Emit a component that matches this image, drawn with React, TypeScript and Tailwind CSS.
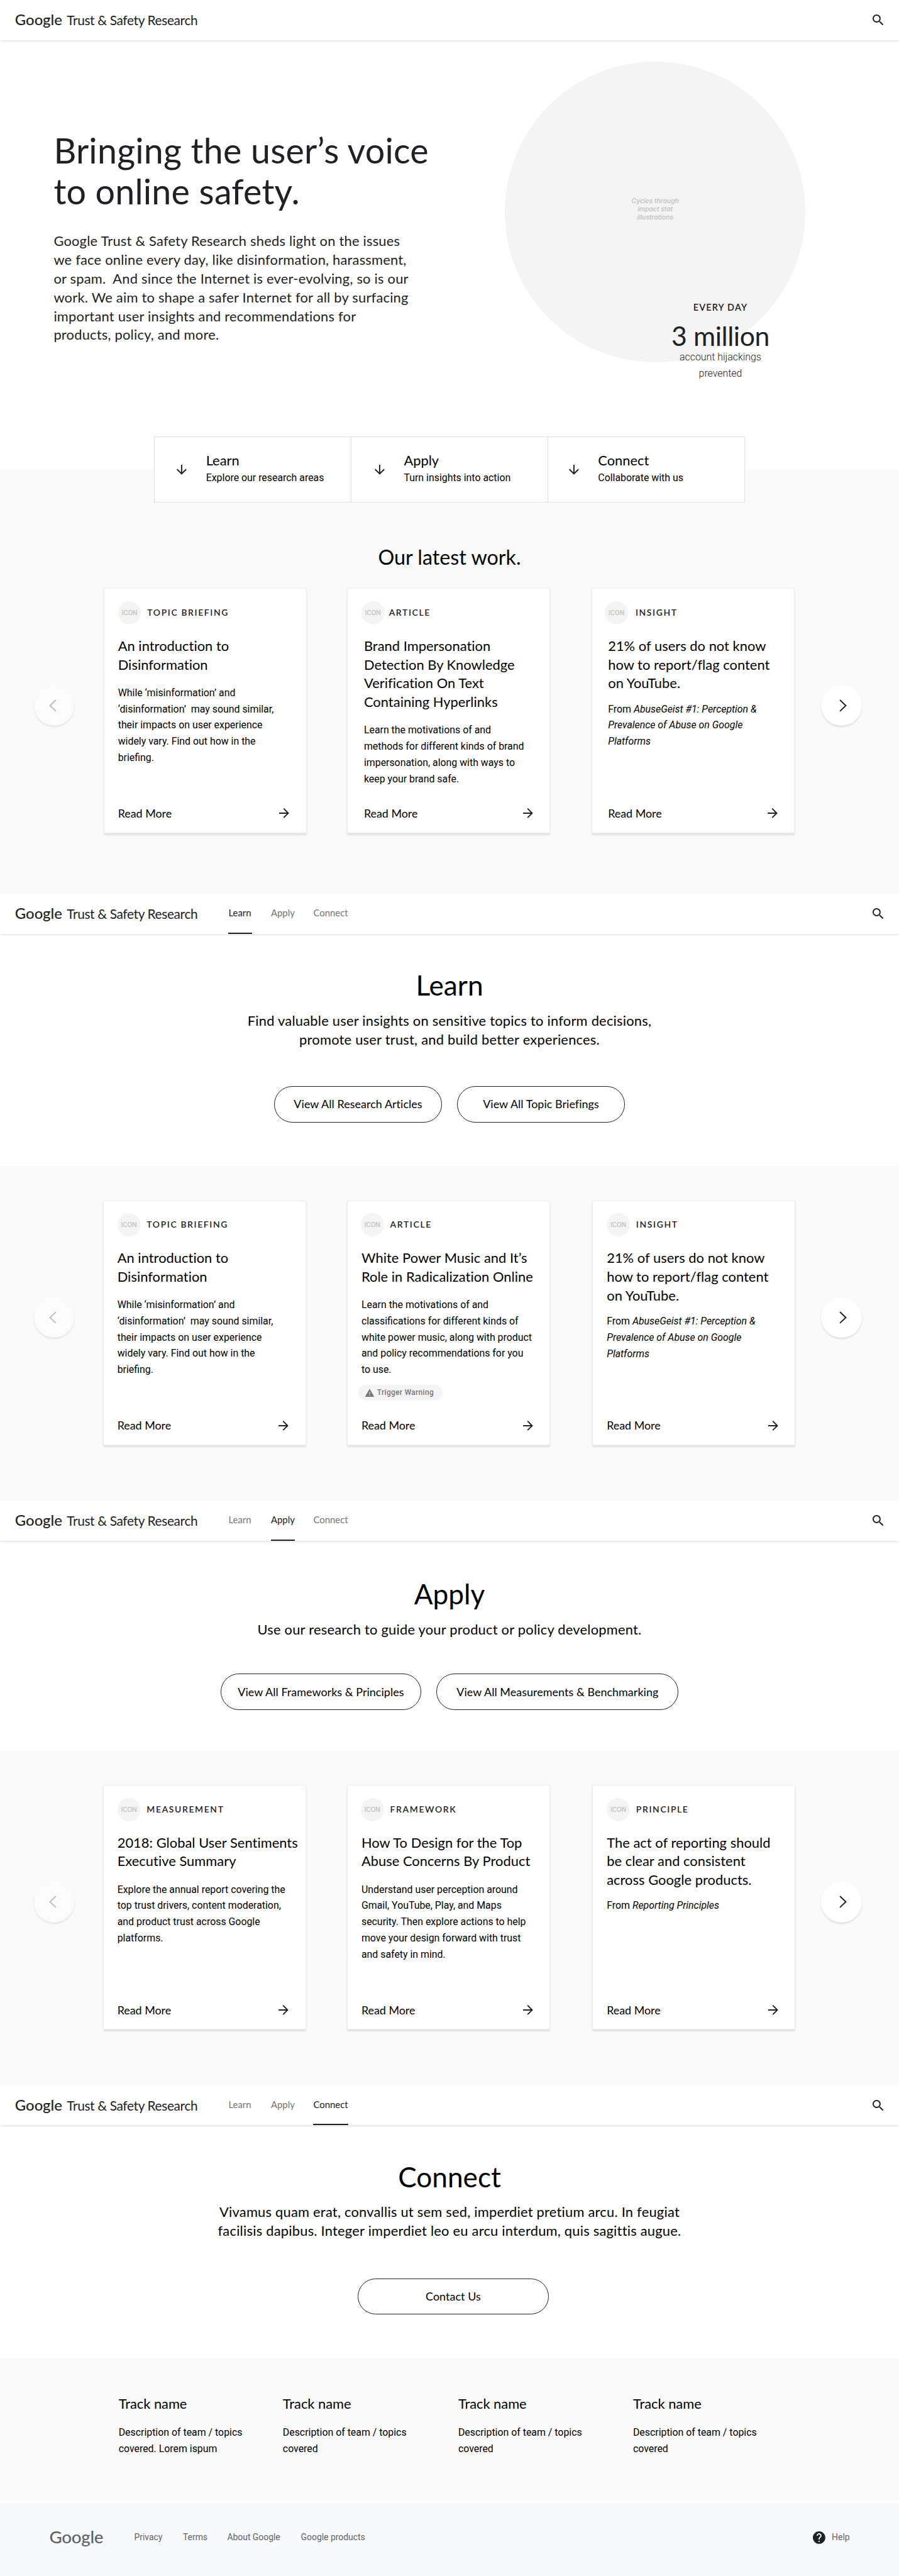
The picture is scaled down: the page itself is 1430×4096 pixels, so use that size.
import React from 'react';
import { MdSearch, MdArrowForward, MdArrowDownward, MdWarning, MdHelp } from 'react-icons/md';

type CardData = {
  x: string;
  label: string;
  iconX?: string;
  labelX: string;
  textX: string;
  title: string[];
  body: React.ReactNode[];
  tag?: boolean;
};

function Lines({ lines }: { lines: React.ReactNode[] }) {
  return (
    <>
      {lines.map((line, i) => (
        <span key={i} className="block whitespace-pre">
          {line}
        </span>
      ))}
    </>
  );
}

function Header({ active }: { active?: string }) {
  const items = [
    { name: 'Learn', cls: 'w-[37.5px] mr-[30.5px]' },
    { name: 'Apply', cls: 'w-[38px] mr-[30px]' },
    { name: 'Connect', cls: 'w-[56px]' },
  ];
  return (
    <header className="relative z-10 flex h-16 items-center bg-white pl-6 pr-[21px] text-[#202124] shadow-[0_2px_3px_rgba(60,64,67,0.16)]">
      <span className="w-[83px] pb-[2px] text-[24px] font-medium leading-8">Google</span>
      <span className="w-[259px] whitespace-nowrap text-[21px] leading-8 tracking-[-0.35px]">Trust &amp; Safety Research</span>
      {active && (
        <nav className="flex h-full text-[15px] leading-[62px]">
          {items.map((it) => (
            <span
              key={it.name}
              className={`${it.cls} h-full whitespace-nowrap ${
                active === it.name ? 'border-b-[2.1px] border-[#202124] text-[#202124]' : 'text-[#757575]'
              }`}
            >
              {it.name}
            </span>
          ))}
        </nav>
      )}
      <MdSearch className="ml-auto size-6" />
    </header>
  );
}

function Card({ c }: { c: CardData }) {
  return (
    <article
      className={`${c.x} relative flex h-[392px] w-[325px] shrink-0 flex-col rounded-[2px] border border-[#ececec] bg-white pt-5 shadow-[0_3px_3px_rgba(0,0,0,0.1)]`}
    >
      <div className={`${c.iconX ?? 'pl-[22px]'} flex h-[37px] items-center`}>
        <span className="flex size-[37px] items-center justify-center rounded-full bg-[#f4f4f4] font-[Inter] text-[10px] font-medium text-[#bdbdbd]">ICON</span>
        <span className={`${c.labelX} text-[14px] font-semibold tracking-[1.65px] text-[#202124]`}>{c.label}</span>
      </div>
      <h3 className={`${c.textX} mt-[19px] text-[22px] leading-[30px] tracking-[0.05px]`}>
        <Lines lines={c.title} />
      </h3>
      <p className={`${c.textX} ${c.title.length === 3 ? 'mt-[13.5px]' : 'mt-[17.5px]'} font-[Roboto] text-[16px] leading-[26px]`}>
        <Lines lines={c.body} />
      </p>
      {c.tag && (
        <span className="ml-[17px] mt-[11px] flex h-[25px] w-[135px] items-center gap-[4px] rounded-full bg-[#f4f4f4] pl-[10px] font-[Roboto] text-[12px] font-medium tracking-[0.35px] text-[#757575]">
          <MdWarning className="size-4" />
          Trigger Warning
        </span>
      )}
      <div className={`${c.textX} mb-[17px] mr-[22.5px] mt-auto flex items-center justify-between text-[18px]`}>
        Read More
        <MdArrowForward className="size-6 text-[#202124]" />
      </div>
    </article>
  );
}

function Carousel({ cards }: { cards: CardData[] }) {
  return (
    <div className="flex">
      <button className="ml-[54px] mt-[155px] flex size-[65px] shrink-0 items-center justify-center rounded-full bg-[#fbfbfb] text-[#bdbdbd] shadow-[0_2px_3px_rgba(0,0,0,0.1)]">
        <svg viewBox="0 0 12 20" className="mr-[4px] h-5 w-3" fill="none" stroke="currentColor" strokeWidth="2">
          <path d="M11 1 1.5 10 11 19" />
        </svg>
      </button>
      {cards.map((c) => (
        <Card key={c.label} c={c} />
      ))}
      <button className="absolute left-[1315.5px] mt-[155px] flex size-[65px] items-center justify-center rounded-full bg-white text-[#202124] shadow-[0_2px_3px_rgba(0,0,0,0.13)]">
        <svg viewBox="0 0 12 20" className="ml-[5px] h-5 w-3" fill="none" stroke="currentColor" strokeWidth="2">
          <path d="M1 1 10.5 10 1 19" />
        </svg>
      </button>
    </div>
  );
}

const disinfo = [
  'While ‘misinformation’ and',
  '‘disinformation’  may sound similar,',
  'their impacts on user experience',
  'widely vary. Find out how in the',
  'briefing.',
];
const abuse = [
  <>From <i>AbuseGeist #1: Perception &amp;</i></>,
  <i>Prevalence of Abuse on Google</i>,
  <i>Platforms</i>,
];
const flagTitle = ['21% of users do not know', 'how to report/flag content', 'on YouTube.'];

const latest: CardData[] = [
  { x: 'ml-[47px]', label: 'TOPIC BRIEFING', labelX: 'ml-[10px]', textX: 'ml-[22px]', title: ['An introduction to', 'Disinformation'], body: disinfo },
  {
    x: 'ml-[65px]', label: 'ARTICLE', labelX: 'ml-[7px]', textX: 'ml-[26px]',
    title: ['Brand Impersonation', 'Detection By Knowledge', 'Verification On Text', 'Containing Hyperlinks'],
    body: ['Learn the motivations of and', 'methods for different kinds of brand', 'impersonation, along with ways to', 'keep your brand safe.'],
  },
  { x: 'ml-[67px]', label: 'INSIGHT', iconX: 'pl-[20px]', labelX: 'ml-[12px]', textX: 'ml-[25px]', title: flagTitle, body: abuse },
];
const learn: CardData[] = [
  { x: 'ml-[46px]', label: 'TOPIC BRIEFING', labelX: 'ml-[10px]', textX: 'ml-[22px]', title: ['An introduction to', 'Disinformation'], body: disinfo },
  {
    x: 'ml-[66px]', label: 'ARTICLE', iconX: 'pl-[21px]', labelX: 'ml-[10px]', textX: 'ml-[22px]', tag: true,
    title: ['White Power Music and It’s', 'Role in Radicalization Online'],
    body: ['Learn the motivations of and', 'classifications for different kinds of', 'white power music, along with product', 'and policy recommendations for you', 'to use.'],
  },
  { x: 'ml-[68px]', label: 'INSIGHT', labelX: 'ml-[10px]', textX: 'ml-[22px]', title: flagTitle, body: abuse },
];
const apply: CardData[] = [
  {
    x: 'ml-[46px]', label: 'MEASUREMENT', labelX: 'ml-[10px]', textX: 'ml-[22px]',
    title: ['2018: Global User Sentiments', 'Executive Summary'],
    body: ['Explore the annual report covering the', 'top trust drivers, content moderation,', 'and product trust across Google', 'platforms.'],
  },
  {
    x: 'ml-[66px]', label: 'FRAMEWORK', iconX: 'pl-[21px]', labelX: 'ml-[10px]', textX: 'ml-[22px]',
    title: ['How To Design for the Top', 'Abuse Concerns By Product'],
    body: ['Understand user perception around', 'Gmail, YouTube, Play, and Maps', 'security. Then explore actions to help', 'move your design forward with trust', 'and safety in mind.'],
  },
  {
    x: 'ml-[68px]', label: 'PRINCIPLE', labelX: 'ml-[10px]', textX: 'ml-[22px]',
    title: ['The act of reporting should', 'be clear and consistent', 'across Google products.'],
    body: [<>From <i>Reporting Principles</i></>],
  },
];

function Intro({ title, lines }: { title: string; lines: string[] }) {
  return (
    <div className="text-center">
      <h2 className="text-[44.5px] leading-[52px]">{title}</h2>
      <p className="mt-[16px] text-[22px] leading-[30px] tracking-[0.25px]">
        <Lines lines={lines} />
      </p>
    </div>
  );
}

const pill = 'flex h-[58px] items-center justify-center rounded-full border border-[#202124] text-[18px] tracking-[0.08px]';

const jumps = [
  { name: 'Learn', sub: 'Explore our research areas', cls: 'w-[315px] pl-[31px] border-r' },
  { name: 'Apply', sub: 'Turn insights into action', cls: 'w-[315px] pl-[33px] border-r' },
  { name: 'Connect', sub: 'Collaborate with us', cls: 'w-[314px] pl-[29px]' },
];

const tracks = [
  { w: 'w-[263px]', second: 'covered. Lorem ispum' },
  { w: 'w-[281px]', second: 'covered' },
  { w: 'w-[280px]', second: 'covered' },
  { w: 'w-[280px]', second: 'covered' },
];

export default function App() {
  return (
    <div className="h-[4125px] w-[1440px] overflow-hidden bg-white font-[Lato,sans-serif] text-black [zoom:0.99306]">
      <section className="h-[1431px]">
        <Header />
        <div className="flex h-[688px] text-[#202124]">
          <div className="w-[809px] pl-[86px] pt-[143px]">
            <h1 className="text-[56px] leading-[66px] tracking-[0.2px]">
              <Lines lines={['Bringing the user’s voice', 'to online safety.']} />
            </h1>
            <p className="mt-[32px] text-[22px] leading-[30px] tracking-[0.24px]">
              <Lines
                lines={[
                  'Google Trust & Safety Research sheds light on the issues',
                  'we face online every day, like disinformation, harassment,',
                  'or spam.  And since the Internet is ever-evolving, so is our',
                  'work. We aim to shape a safer Internet for all by surfacing',
                  'important user insights and recommendations for',
                  'products, policy, and more.',
                ]}
              />
            </p>
          </div>
          <div className="relative mt-[35px] flex size-[481px] items-center justify-center rounded-full bg-[#f4f4f4]">
            <p className="mb-[8px] text-center font-[Inter] text-[10.5px] font-medium italic leading-[13px] text-[#bdbdbd]">
              <Lines lines={['Cycles through', 'impact stat', 'illustrations']} />
            </p>
            <div className="absolute left-[245px] top-[383px] w-[200px] text-center">
              <div className="text-[14.5px] font-semibold leading-5 tracking-[1.2px]">EVERY DAY</div>
              <div className="mt-[10px] text-[43px] leading-[52px] tracking-[-0.4px]">3 million</div>
              <div className="mt-[-5px] font-[Roboto] text-[16px] font-light leading-[26px]">
                <Lines lines={['account hijackings', 'prevented']} />
              </div>
            </div>
          </div>
        </div>
        <div className="h-[679px] bg-[#fafafa]">
          <div className="relative top-[-53px] mx-auto flex h-[106px] w-[946px] border border-[#dfdfdf] bg-white">
            {jumps.map((j) => (
              <div key={j.name} className={`${j.cls} flex items-center border-[#dfdfdf]`}>
                <MdArrowDownward className="size-6 text-[#202124]" />
                <div className="-mt-[2px] ml-[27px]">
                  <div className="mb-[2px] text-[22px] leading-[26px]">{j.name}</div>
                  <div className="font-[Roboto] text-[16px] leading-[26px]">{j.sub}</div>
                </div>
              </div>
            ))}
          </div>
          <h2 className="mb-[30px] mt-[14px] text-center text-[32.5px] leading-10">Our latest work.</h2>
          <Carousel cards={latest} />
        </div>
      </section>

      <section className="h-[972px] bg-[#fafafa]">
        <Header active="Learn" />
        <div className="h-[372px] bg-white pt-[56px]">
          <Intro title="Learn" lines={['Find valuable user insights on sensitive topics to inform decisions,', 'promote user trust, and build better experiences.']} />
          <div className="mt-[60px] flex justify-center gap-[24px]">
            <button className={`${pill} w-[269px]`}>View All Research Articles</button>
            <button className={`${pill} w-[269px]`}>View All Topic Briefings</button>
          </div>
        </div>
        <div className="pt-[55px]">
          <Carousel cards={learn} />
        </div>
      </section>

      <section className="h-[936px] bg-[#fafafa]">
        <Header active="Apply" />
        <div className="h-[336px] bg-white pt-[59px]">
          <Intro title="Apply" lines={['Use our research to guide your product or policy development.']} />
          <div className="mt-[56px] flex justify-center gap-[24px]">
            <button className={`${pill} w-[322px]`}>View All Frameworks &amp; Principles</button>
            <button className={`${pill} w-[388px]`}>View All Measurements &amp; Benchmarking</button>
          </div>
        </div>
        <div className="pt-[55px]">
          <Carousel cards={apply} />
        </div>
      </section>

      <section>
        <Header active="Connect" />
        <div className="h-[373px] bg-white pt-[56px]">
          <Intro title="Connect" lines={['Vivamus quam erat, convallis ut sem sed, imperdiet pretium arcu. In feugiat', 'facilisis dapibus. Integer imperdiet leo eu arcu interdum, quis sagittis augue.']} />
          <button className={`${pill} ml-[573px] mt-[61px] w-[306px]`}>Contact Us</button>
        </div>
        <div className="flex h-[228px] bg-[#fafafa] pl-[190px] pt-[58px]">
          {tracks.map((t, i) => (
            <div key={i} className={t.w}>
              <h3 className="text-[22px] leading-[30px]">Track name</h3>
              <p className="mt-[18px] font-[Roboto] text-[16px] leading-[26px]">
                <Lines lines={['Description of team / topics', t.second]} />
              </p>
            </div>
          ))}
        </div>
      </section>

      <footer className="mt-1 flex h-[118px] items-center bg-[#f8f9fa] pb-[8px] pl-[79px] pr-[79px] font-[Roboto] text-[14px] text-[#5f6368]">
        <span className="w-[136px] pb-[2px] font-[Lato] text-[28px] font-medium tracking-[-0.3px]">Google</span>
        <span className="w-[78px]">Privacy</span>
        <span className="w-[71px]">Terms</span>
        <span className="w-[118px]">About Google</span>
        <span>Google products</span>
        <MdHelp className="ml-auto mr-[8px] size-6 text-[#202124]" />
        <span>Help</span>
      </footer>
    </div>
  );
}
